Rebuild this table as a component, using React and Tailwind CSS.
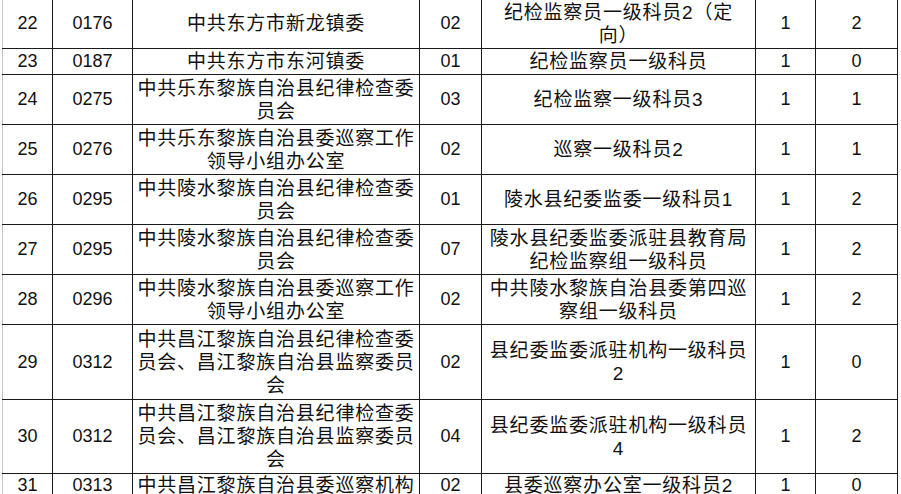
const ROWS = [
  { no: '22', code: '0176', unit: ['中共东方市新龙镇委'], pos: '02', name: ['纪检监察员一级科员2（定', '向）'], plan: '1', count: '2', h: 'h-[50px]' },
  { no: '23', code: '0187', unit: ['中共东方市东河镇委'], pos: '01', name: ['纪检监察员一级科员'], plan: '1', count: '0', h: 'h-[26px]' },
  { no: '24', code: '0275', unit: ['中共乐东黎族自治县纪律检查委', '员会'], pos: '03', name: ['纪检监察一级科员3'], plan: '1', count: '1', h: 'h-[50px]' },
  { no: '25', code: '0276', unit: ['中共乐东黎族自治县委巡察工作', '领导小组办公室'], pos: '02', name: ['巡察一级科员2'], plan: '1', count: '1', h: 'h-[50px]' },
  { no: '26', code: '0295', unit: ['中共陵水黎族自治县纪律检查委', '员会'], pos: '01', name: ['陵水县纪委监委一级科员1'], plan: '1', count: '2', h: 'h-[50px]' },
  { no: '27', code: '0295', unit: ['中共陵水黎族自治县纪律检查委', '员会'], pos: '07', name: ['陵水县纪委监委派驻县教育局', '纪检监察组一级科员'], plan: '1', count: '2', h: 'h-[50px]' },
  { no: '28', code: '0296', unit: ['中共陵水黎族自治县委巡察工作', '领导小组办公室'], pos: '02', name: ['中共陵水黎族自治县委第四巡', '察组一级科员'], plan: '1', count: '2', h: 'h-[50px]' },
  { no: '29', code: '0312', unit: ['中共昌江黎族自治县纪律检查委', '员会、昌江黎族自治县监察委员', '会'], pos: '02', name: ['县纪委监委派驻机构一级科员', '2'], plan: '1', count: '0', h: 'h-[75px]' },
  { no: '30', code: '0312', unit: ['中共昌江黎族自治县纪律检查委', '员会、昌江黎族自治县监察委员', '会'], pos: '04', name: ['县纪委监委派驻机构一级科员', '4'], plan: '1', count: '2', h: 'h-[74px]' },
  { no: '31', code: '0313', unit: ['中共昌江黎族自治县委巡察机构'], pos: '02', name: ['县委巡察办公室一级科员2'], plan: '1', count: '0', h: 'h-[24px]' },
]

function Lines({ lines }) {
  return (
    <>
      {lines.map((l, i) => (
        <div key={i} className="whitespace-nowrap">{l}</div>
      ))}
    </>
  )
}

export default function App() {
  const cell = 'border border-[#1a1a1a] text-center align-middle p-0'
  const num = `${cell} text-[18px]`
  const cjk = `${cell} text-[19px] tracking-[0.8px]`
  return (
    <div className="w-[901px] h-[494px] overflow-hidden bg-white">
      <table
        className="ml-[2px] -mt-[2px] w-[895px] table-fixed border-collapse text-[#111] leading-[23px]"
        style={{ fontFamily: '"Liberation Sans", "Noto Sans CJK SC", sans-serif' }}
      >
        <colgroup>
          <col className="w-[50px]" />
          <col className="w-[80px]" />
          <col className="w-[287px]" />
          <col className="w-[62px]" />
          <col className="w-[274px]" />
          <col className="w-[60px]" />
          <col className="w-[82px]" />
        </colgroup>
        <tbody>
          {ROWS.map((r) => (
            <tr key={r.no} className={r.h}>
              <td className={`${num} border-l-[#c4c4c4]`}>{r.no}</td>
              <td className={num}>{r.code}</td>
              <td className={cjk}><Lines lines={r.unit} /></td>
              <td className={num}>{r.pos}</td>
              <td className={cjk}><Lines lines={r.name} /></td>
              <td className={num}>{r.plan}</td>
              <td className={num}>{r.count}</td>
            </tr>
          ))}
        </tbody>
      </table>
    </div>
  )
}
